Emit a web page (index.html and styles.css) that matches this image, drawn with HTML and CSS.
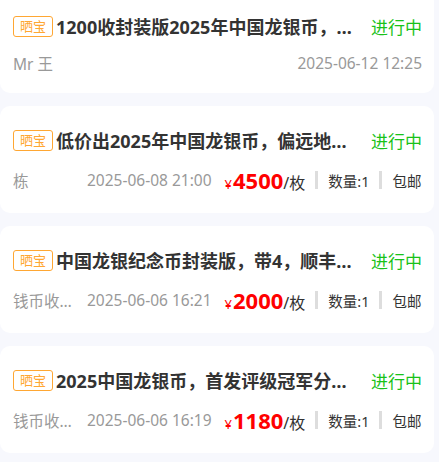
FILE: index.html
```html
<!DOCTYPE html>
<html>
  <head>
    <meta charset="UTF-8" />
    <title>晒宝列表</title>
    <link rel="stylesheet" href="styles.css">
  </head>
  <body>
    <div class="list">
      <div class="card">
        <div class="head">
          <span class="badge">晒宝</span>
          <span class="title">1200收封装版2025年中国龙银币，偏远地区不包邮</span>
          <span class="status">进行中</span>
        </div>
        <div class="meta meta-simple">
          <span class="who">Mr 王</span>
          <span class="time">2025-06-12 12:25</span>
        </div>
      </div>

      <div class="card">
        <div class="head">
          <span class="badge">晒宝</span>
          <span class="title">低价出2025年中国龙银币，偏远地区不包邮</span>
          <span class="status">进行中</span>
        </div>
        <div class="meta">
          <span class="who author">栋</span>
          <span class="time">2025-06-08 21:00</span>
          <span class="price"><i>¥</i><b>4500</b>/枚</span>
          <span class="sep"></span>
          <span class="info">数量:1</span>
          <span class="sep"></span>
          <span class="info">包邮</span>
        </div>
      </div>

      <div class="card">
        <div class="head">
          <span class="badge">晒宝</span>
          <span class="title">中国龙银纪念币封装版，带4，顺丰包邮</span>
          <span class="status">进行中</span>
        </div>
        <div class="meta">
          <span class="who author">钱币收藏家</span>
          <span class="time">2025-06-06 16:21</span>
          <span class="price"><i>¥</i><b>2000</b>/枚</span>
          <span class="sep"></span>
          <span class="info">数量:1</span>
          <span class="sep"></span>
          <span class="info">包邮</span>
        </div>
      </div>

      <div class="card">
        <div class="head">
          <span class="badge">晒宝</span>
          <span class="title">2025中国龙银币，首发评级冠军分70分</span>
          <span class="status">进行中</span>
        </div>
        <div class="meta">
          <span class="who author">钱币收藏家</span>
          <span class="time">2025-06-06 16:19</span>
          <span class="price"><i>¥</i><b>1180</b>/枚</span>
          <span class="sep"></span>
          <span class="info">数量:1</span>
          <span class="sep"></span>
          <span class="info">包邮</span>
        </div>
      </div>
    </div>
  </body>
</html>
```

FILE: styles.css
```css
body {
  margin: 0;
  background: #f7f8fd;
  font-family: "Noto Sans", "Noto Sans CJK SC", sans-serif;
  overflow: hidden;
}
.list {
  display: flex;
  flex-direction: column;
  gap: 13px;
  margin-top: -8px;
  padding-right: 5px;
}
.card {
  background: #fff;
  border-radius: 10px;
  padding: 22px 12px 19px 13px;
  display: flex;
  flex-direction: column;
  gap: 14px;
}
.head {
  display: flex;
  align-items: center;
  height: 24px;
}
.badge {
  flex: none;
  border: 1px solid #ffa733;
  border-radius: 3px;
  color: #ffa733;
  font-size: 13px;
  line-height: 19px;
  padding: 0 6px;
}
.title {
  flex: 1;
  min-width: 0;
  margin-left: 3px;
  font-size: 18px;
  font-weight: bold;
  color: #333;
  white-space: nowrap;
  overflow: hidden;
  text-overflow: ellipsis;
}
.status {
  flex: none;
  margin-left: 17px;
  font-size: 17px;
  color: #19c219;
}
.meta {
  display: flex;
  align-items: center;
  height: 28px;
  font-size: 15.5px;
  color: #999;
  white-space: nowrap;
}
.meta-simple {
  height: 22px;
  justify-content: space-between;
}
.author {
  width: 60px;
  margin-right: 14px;
  overflow: hidden;
  text-overflow: ellipsis;
}
.price {
  margin-left: 13px;
  font-size: 16px;
  color: #333;
}
.price i {
  font-style: normal;
  font-size: 13px;
  color: #f00;
  margin-right: 1px;
}
.price b {
  font-size: 22px;
  color: #f00;
}
.sep {
  width: 3px;
  height: 18px;
  background: #ddd;
  margin: 0 10px;
}
.info {
  font-size: 14.5px;
  color: #333;
}
```
